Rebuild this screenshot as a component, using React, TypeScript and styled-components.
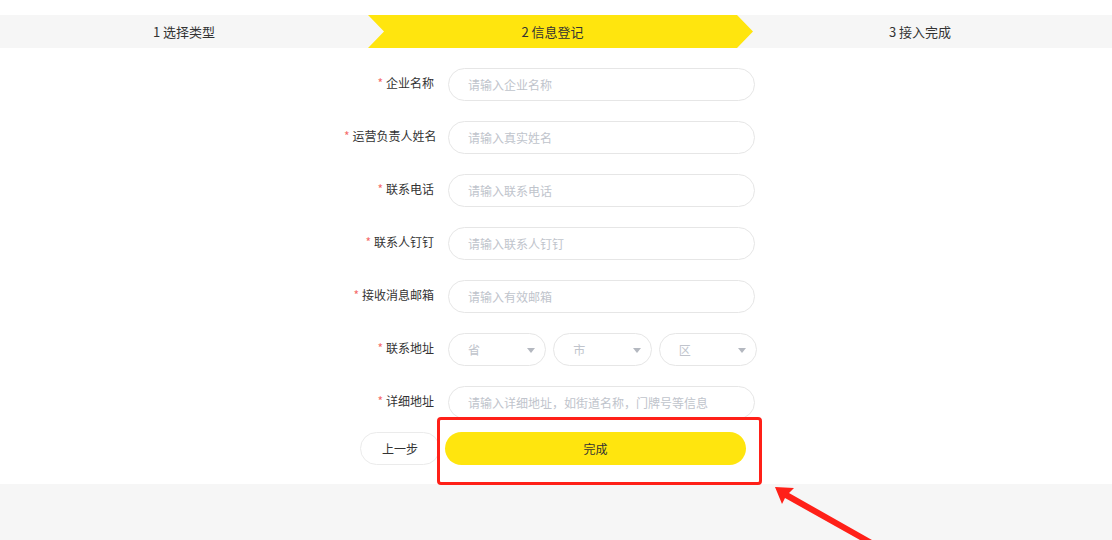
import styled, { createGlobalStyle } from 'styled-components';

const GlobalStyle = createGlobalStyle`
  html, body {
    margin: 0;
    padding: 0;
    background: #fff;
  }
  body {
    font-family: "Noto Sans CJK SC", "Liberation Sans", sans-serif;
    color: #333;
  }
`;

const steps = ['1 选择类型', '2 信息登记', '3 接入完成'];

const fields = [
  { label: '企业名称', placeholder: '请输入企业名称' },
  { label: '运营负责人姓名', placeholder: '请输入真实姓名' },
  { label: '联系电话', placeholder: '请输入联系电话' },
  { label: '联系人钉钉', placeholder: '请输入联系人钉钉' },
  { label: '接收消息邮箱', placeholder: '请输入有效邮箱' }
];

const regions = ['省', '市', '区'];

const App = () => {
  return (
    <Page>
      <GlobalStyle />
      <Steps>
        {steps.map((step, index) => (
          <Step key={index} $index={index}>
            {step}
          </Step>
        ))}
      </Steps>

      <FormArea>
        <Form>
          {fields.map((item, index) => (
            <Row key={index}>
              <Label>
                <Star>*</Star>
                {item.label}
              </Label>
              <Input placeholder={item.placeholder} />
            </Row>
          ))}
          <Row>
            <Label>
              <Star>*</Star>联系地址
            </Label>
            <Selects>
              {regions.map((r) => (
                <Select key={r}>
                  <span>{r}</span>
                  <Caret />
                </Select>
              ))}
            </Selects>
          </Row>
          <Row>
            <Label>
              <Star>*</Star>详细地址
            </Label>
            <Input placeholder="请输入详细地址，如街道名称，门牌号等信息" />
          </Row>
          <Actions>
            <BackButton>上一步</BackButton>
            <DoneButton>完成</DoneButton>
          </Actions>
        </Form>
      </FormArea>

      <Footer />

      <Highlight />
      <Arrow viewBox="0 0 110 60" width="110" height="60">
        <polygon
          points="5,7 24,8 19,13 102,60 90,60 15,18 12,24"
          fill="#ff2018"
        />
      </Arrow>
    </Page>
  );
};

export default App;

const Page = styled.div`
  position: relative;
  display: flex;
  flex-direction: column;
  width: 100%;
  height: 540px;
  overflow: hidden;
`;

const Steps = styled.div`
  display: flex;
  margin-top: 15px;
  height: 33px;
  background: #f6f6f6;
`;

const Step = styled.div<{ $index: number }>`
  display: flex;
  align-items: center;
  justify-content: center;
  font-size: 13px;
  color: #333;
  box-sizing: border-box;
  ${({ $index }) =>
    $index === 0
      ? `width: 368px;`
      : $index === 1
      ? `
    width: 385px;
    padding-right: 16px;
    background: #ffe50e;
    clip-path: polygon(0 0, 369px 0, 385px 50%, 369px 100%, 0 100%, 16px 50%);
  `
      : `
    flex: 1;
    margin-left: -16px;
    padding-right: 9px;
  `}
`;

const FormArea = styled.div`
  padding: 20px 0 19px;
  background: #fff;
`;

const Form = styled.div`
  display: flex;
  flex-direction: column;
  gap: 20px;
  margin-left: 344px;
  width: 413px;
`;

const Row = styled.div`
  display: grid;
  grid-template-columns: 90px 1fr;
  column-gap: 14px;
  align-items: start;
  height: 33px;
`;

const Label = styled.label`
  text-align: right;
  font-size: 12px;
  line-height: 30px;
  color: #333;
  white-space: nowrap;
`;

const Star = styled.span`
  color: #f56c6c;
  margin-right: 3px;
`;

const Input = styled.input`
  box-sizing: border-box;
  width: 307px;
  height: 33px;
  border: 1px solid #e6e6e6;
  border-radius: 17px;
  padding: 0 19px;
  font-family: inherit;
  font-size: 12px;
  color: #333;
  outline: none;
  &::placeholder {
    color: #c0c4cc;
  }
`;

const Selects = styled.div`
  display: flex;
  gap: 7px;
  width: 309px;
`;

const Select = styled.div`
  box-sizing: border-box;
  flex: 1;
  height: 33px;
  display: flex;
  align-items: center;
  justify-content: space-between;
  padding: 0 10px 0 19px;
  border: 1px solid #e6e6e6;
  border-radius: 17px;
  font-size: 12px;
  color: #c0c4cc;
`;

const Caret = styled.i`
  width: 0;
  height: 0;
  border-left: 4px solid transparent;
  border-right: 4px solid transparent;
  border-top: 5px solid #b4b8c0;
  margin-top: 2px;
`;

const Actions = styled.div`
  display: flex;
  gap: 5px;
  margin: -7px 0 0 16px;
`;

const BackButton = styled.button`
  box-sizing: border-box;
  width: 80px;
  height: 33px;
  border: 1px solid #ebebeb;
  border-radius: 17px;
  background: #fff;
  font-family: inherit;
  font-size: 12px;
  color: #333;
`;

const DoneButton = styled.button`
  width: 301px;
  height: 33px;
  border: none;
  border-radius: 17px;
  background: #ffe50e;
  font-family: inherit;
  font-size: 12px;
  color: #333;
`;

const Footer = styled.div`
  flex: 1;
  background: #f6f6f6;
`;

const Highlight = styled.div`
  position: absolute;
  left: 437px;
  top: 417px;
  width: 325px;
  height: 68px;
  box-sizing: border-box;
  border: 3px solid #ff2018;
  border-radius: 4px;
  pointer-events: none;
`;

const Arrow = styled.svg`
  position: absolute;
  left: 770px;
  top: 480px;
  pointer-events: none;
`;
